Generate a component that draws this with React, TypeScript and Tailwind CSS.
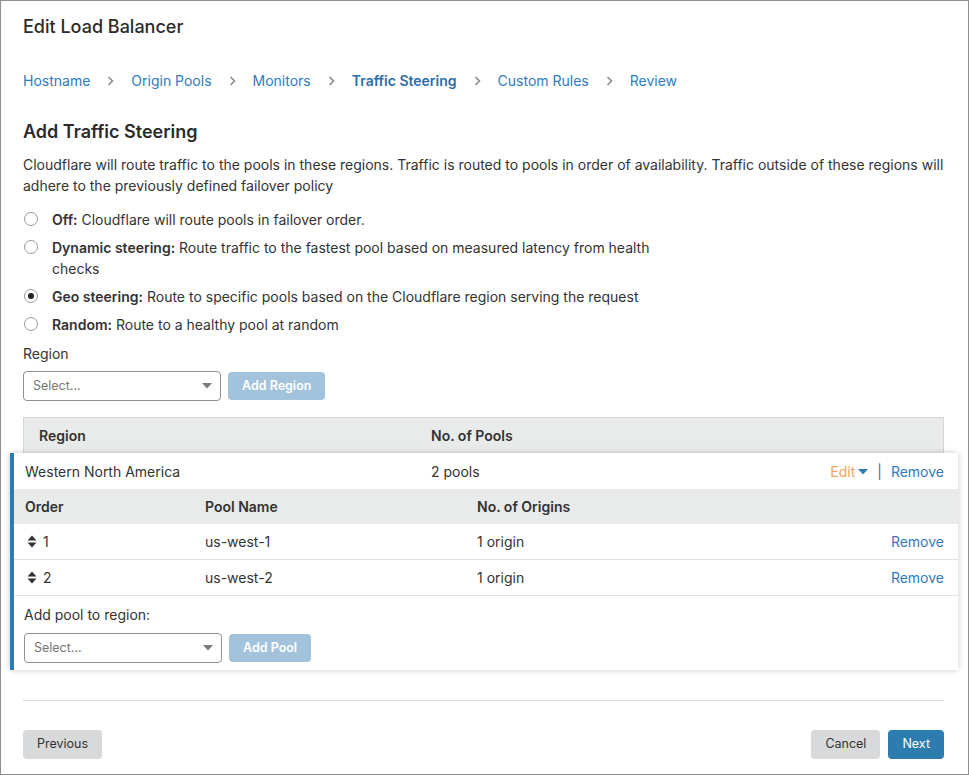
import React, { useState } from 'react';

const link = 'text-[#2f7bbf]';

const Chevron = () => (
  <svg width="9" height="12" viewBox="0 0 9 12" className="mx-[16px] shrink-0">
    <path d="M2.5 2l4 4-4 4" fill="none" stroke="#8a8a8a" strokeWidth="1.6" />
  </svg>
);

const Caret = ({ color = '#7a7a7a' }: { color?: string }) => (
  <svg width="10" height="6" viewBox="0 0 10 6">
    <path d="M0 0h10L5 5.5z" fill={color} />
  </svg>
);

const SortIcon = () => (
  <svg width="10" height="13" viewBox="0 0 10 13">
    <path d="M0.5 5.5L5 0.5 9.5 5.5z" fill="#333" />
    <path d="M0.5 7.5h9L5 12.5z" fill="#333" />
  </svg>
);

const Select = () => (
  <div className="w-[198px] h-[30px] border border-[#8f8f8f] rounded-[4px] bg-white flex items-center justify-between pl-[9px] pr-[8px]">
    <span className="text-[12.5px] text-[#777]">Select...</span>
    <Caret />
  </div>
);

const Radio = ({ checked }: { checked?: boolean }) => (
  <div className="w-[14px] h-[14px] rounded-full border border-[#9a9a9a] bg-white flex items-center justify-center shrink-0 mt-[3px]">
    {checked && <div className="w-[6px] h-[6px] rounded-full bg-[#222]" />}
  </div>
);

const steps = ['Hostname', 'Origin Pools', 'Monitors', 'Traffic Steering', 'Custom Rules', 'Review'];

const options = [
  { key: 'off', title: 'Off:', text: 'Cloudflare will route pools in failover order.' },
  { key: 'dynamic', title: 'Dynamic steering:', text: 'Route traffic to the fastest pool based on measured latency from health checks' },
  { key: 'geo', title: 'Geo steering:', text: 'Route to specific pools based on the Cloudflare region serving the request' },
  { key: 'random', title: 'Random:', text: 'Route to a healthy pool at random' },
];

const pools = [
  { order: 1, name: 'us-west-1', origins: '1 origin' },
  { order: 2, name: 'us-west-2', origins: '1 origin' },
];

export default function App() {
  const [mode, setMode] = useState('geo');

  return (
    <div className="h-[775px] w-[969px] border border-[#8e8e8e] bg-white text-[#333] font-['Inter','Helvetica_Neue',Arial,sans-serif] overflow-hidden">
      <div className="pl-[22px] pr-[24px] pt-[14px]">
        <h1 className="text-[18px] leading-[24px] font-medium text-[#2b2b2b]">Edit Load Balancer</h1>

        <nav className="mt-[32px] flex items-center text-[14px] leading-[20px]">
          {steps.map((s, i) => (
            <React.Fragment key={s}>
              {i > 0 && <Chevron />}
              <span className={s === 'Traffic Steering' ? 'font-semibold text-[#2a6ea6]' : link}>{s}</span>
            </React.Fragment>
          ))}
        </nav>

        <h2 className="mt-[29px] text-[18px] leading-[24px] font-semibold text-[#2b2b2b]">Add Traffic Steering</h2>
        <p className="mt-[10px] text-[14px] leading-[21px]">
          Cloudflare will route traffic to the pools in these regions. Traffic is routed to pools in order of availability. Traffic outside of these regions will adhere to the previously defined failover policy
        </p>

        <div className="mt-[13px] flex flex-col gap-[7px]">
          {options.map(o => (
            <label key={o.key} className="flex gap-[14px] pl-[1px] cursor-pointer" onClick={() => setMode(o.key)}>
              <Radio checked={mode === o.key} />
              <span className="text-[14px] leading-[21px] max-w-[620px]">
                <b className="font-semibold">{o.title}</b> {o.text}
              </span>
            </label>
          ))}
        </div>

        <div className="mt-[8px] text-[14px] leading-[21px]">Region</div>
        <div className="mt-[7px] flex items-center gap-[7px]">
          <Select />
          <button className="h-[28px] px-[14px] rounded-[4px] bg-[#a3c3dc] text-white text-[12.5px] font-semibold">Add Region</button>
        </div>

        <div className="mt-[16px] h-[36px] bg-[#e9eaea] border border-[#d6d6d6] border-b-0 flex items-center text-[14px] font-semibold">
          <div className="pl-[15px] w-[407px]">Region</div>
          <div>No. of Pools</div>
        </div>

        <div className="-ml-[13px] -mr-[14px] bg-white border-l-[4px] border-[#2c7cb0] shadow-[0_0_6px_rgba(0,0,0,0.22)] text-[14px]">
          <div className="h-[36px] flex items-center pl-[11px] pr-[14px]">
            <div className="w-[406px]">Western North America</div>
            <div className="flex-1">2 pools</div>
            <div className="flex items-center">
              <span className="text-[#f2a360]">Edit</span>
              <span className="ml-[3px] mt-[1px]"><Caret color="#2c7cb0" /></span>
              <span className="mx-[9px] text-[#666]">|</span>
              <span className={link}>Remove</span>
            </div>
          </div>
          <div className="h-[35px] bg-[#e9eaea] flex items-center pl-[11px] font-semibold">
            <div className="w-[180px]">Order</div>
            <div className="w-[272px]">Pool Name</div>
            <div>No. of Origins</div>
          </div>
          {pools.map(p => (
            <div key={p.order} className="h-[36px] border-b border-[#e2e2e2] flex items-center pl-[11px] pr-[14px]">
              <div className="w-[180px] flex items-center gap-[6px] pl-[2px]">
                <SortIcon />
                <span>{p.order}</span>
              </div>
              <div className="w-[272px]">{p.name}</div>
              <div className="flex-1">{p.origins}</div>
              <span className={link}>Remove</span>
            </div>
          ))}
          <div className="pl-[10px] pt-[8px] pb-[7px]">
            <div className="leading-[21px]">Add pool to region:</div>
            <div className="mt-[8px] flex items-center gap-[7px]">
              <Select />
              <button className="h-[28px] px-[14px] rounded-[4px] bg-[#a3c3dc] text-white text-[12.5px] font-semibold">Add Pool</button>
            </div>
          </div>
        </div>

        <div className="mt-[30px] border-t border-[#d9d9d9]" />

        <div className="mt-[29px] flex items-center justify-between text-[12.5px]">
          <button className="h-[29px] px-[14px] rounded-[4px] bg-[#d8d9da] text-[#333]">Previous</button>
          <div className="flex items-center gap-[8px]">
            <button className="h-[29px] px-[14px] rounded-[4px] bg-[#d8d9da] text-[#333]">Cancel</button>
            <button className="h-[29px] px-[14px] rounded-[4px] bg-[#2c7cb0] text-white">Next</button>
          </div>
        </div>
      </div>
    </div>
  );
}
